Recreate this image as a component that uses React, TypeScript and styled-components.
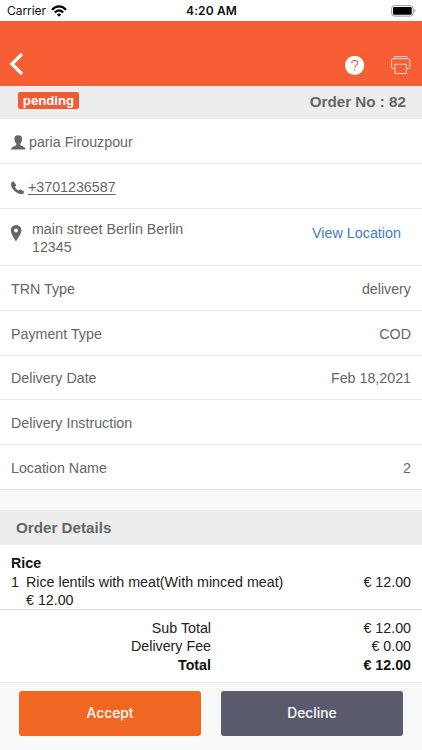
import React from "react";
import styled, { createGlobalStyle } from "styled-components";

const Global = createGlobalStyle`
  * { box-sizing: border-box; }
  body { margin: 0; background: #f9f9f9; }
`;

const Screen = styled.div`
  width: 422px;
  height: 750px;
  display: flex;
  flex-direction: column;
  overflow: hidden;
  background: #f9f9f9;
  color: #666;
  font: 14.25px/18px "Liberation Sans", Arial, sans-serif;
  white-space: nowrap;
`;

const StatusBar = styled.div`
  height: 21px;
  flex: none;
  display: grid;
  grid-template-columns: 1fr auto 1fr;
  align-items: center;
  padding: 1px 6px 0 7px;
  background: #fff;
  color: #111;
  font: 12px/18px Inter, sans-serif;
`;

const Carrier = styled.div`
  display: flex;
  align-items: center;
  gap: 5px;
  letter-spacing: -0.05px;
`;

const Clock = styled.div`
  font-weight: 600;
  font-size: 12px;
  letter-spacing: 0.12px;
`;

const BatterySlot = styled.div`
  display: flex;
  justify-content: flex-end;
`;

const Header = styled.header`
  height: 65px;
  flex: none;
  display: flex;
  align-items: flex-end;
  justify-content: space-between;
  padding: 0 11px 10px 9px;
  background: #f85e35;
`;

const Actions = styled.div`
  display: flex;
  align-items: center;
  gap: 26px;
`;

const IconButton = styled.button`
  display: flex;
  padding: 0;
  border: 0;
  background: none;
`;

const OrderBar = styled.div`
  height: 33px;
  flex: none;
  display: flex;
  justify-content: space-between;
  align-items: flex-start;
  padding: 6px 16px 0 18px;
  background: #ededed;
  font-weight: bold;
`;

const Badge = styled.span`
  width: 61px;
  height: 17px;
  border-radius: 2px;
  background: #f05a36;
  color: #fff;
  font-size: 13.2px;
  line-height: 18px;
  text-align: center;
`;

const OrderNumber = styled.span`
  margin-top: 1px;
  font-size: 15.2px;
`;

const Row = styled.div<{ $height?: number }>`
  height: ${(p) => p.$height ?? 45}px;
  flex: none;
  display: flex;
  align-items: center;
  justify-content: space-between;
  padding: 1px 11px 0;
  border-bottom: 1px solid #e6e6e6;
  background: #fff;
`;

const Contact = styled.div<{ $gap: number }>`
  display: flex;
  align-items: center;
  gap: ${(p) => p.$gap}px;
`;

const Phone = styled.a`
  color: inherit;
  text-decoration: underline;
  text-decoration-thickness: 1px;
  text-underline-offset: 2px;
`;

const MapLink = styled.a`
  margin: 0 10px 9px 0;
  color: #3e80c3;
  font-size: 14.35px;
`;

const SectionTitle = styled.h2`
  height: 35px;
  flex: none;
  margin: 20px 0 0;
  padding: 0 16px;
  background: #ededed;
  font-size: 15.2px;
  line-height: 36px;
`;

const Items = styled.section`
  height: 65px;
  flex: none;
  padding: 9px 11px 0;
  border-bottom: 1px solid #ddd;
  background: #fff;
  color: #222;
`;

const Category = styled.div`
  height: 19px;
  color: #111;
  font-weight: bold;
`;

const Item = styled.div`
  display: grid;
  grid-template-columns: 15px 1fr auto;
`;

const Totals = styled.section`
  height: 73px;
  flex: none;
  display: grid;
  grid-template-columns: 200px 1fr;
  grid-auto-rows: 18.3px;
  padding: 9px 11px 0;
  border-bottom: 1px solid #e3e3e3;
  background: #fff;
  color: #222;
  text-align: right;
`;

const Amount = styled.div<{ $strong?: boolean }>`
  font-weight: ${(p) => (p.$strong ? "bold" : "normal")};
  color: ${(p) => (p.$strong ? "#111" : "#222")};
`;

const Footer = styled.footer`
  display: grid;
  grid-template-columns: 182px 182px;
  gap: 20px;
  padding: 8px 19px 0;
`;

const ActionButton = styled.button<{ $color: string }>`
  height: 45px;
  padding: 0;
  border: 0;
  border-radius: 3px;
  background: ${(p) => p.$color};
  color: #fff;
  font: 500 13.8px/45px Inter, sans-serif;
`;

const WifiIcon = () => (
  <svg width="16" height="12" viewBox="0 0 16 12" fill="none" stroke="#000" strokeWidth="2.2">
    <path d="M1 4.9C5 .1 11 .1 15 4.9" />
    <path d="M3.8 7.6c2.7-2.9 5.7-2.9 8.4 0" />
    <path d="M5.7 9.4c1.5-1.3 3.1-1.3 4.6 0L8 11.7Z" fill="#000" stroke="none" />
  </svg>
);

const BatteryIcon = () => (
  <svg width="25" height="12" viewBox="0 0 25 12">
    <rect x=".6" y=".6" width="21.5" height="10.5" rx="2.8" fill="#fff" stroke="#999" />
    <rect x="2" y="2" width="18.7" height="7.7" rx="1.3" />
    <path d="M23.3 4v3.6q1.2-.5 1.2-1.8T23.3 4" fill="#888" />
  </svg>
);

const BackIcon = () => (
  <svg width="16" height="24" viewBox="0 0 16 24" fill="none" stroke="#fff" strokeWidth="3.2">
    <path d="M13 2 2.8 12 13 22" />
  </svg>
);

const HelpIcon = () => (
  <svg width="20" height="20" viewBox="0 0 20 20">
    <circle cx="9.6" cy="9.4" r="9.6" fill="#fff" />
    <path d="M6.7 7.4q0-3 3-3t3 2.6c0 2-2.9 2.3-2.9 4.8" fill="none" stroke="#f4683f" strokeWidth="1.1" />
    <circle cx="9.8" cy="14.1" r=".8" fill="#f4683f" />
  </svg>
);

const PrinterIcon = () => (
  <svg width="20" height="20" viewBox="0 0 20 20" fill="none" stroke="#ffd9c9" strokeWidth="1">
    <path d="M3.5 2.7V.6h12.3v2.1M3.9 12.6H2.2Q.6 12.6.6 11V4.2q0-1.5 1.6-1.5h14.9q1.6 0 1.6 1.5V11q0 1.6-1.6 1.6h-1.7" />
    <path d="M3.9 8.2h11.5v9.3H3.9Z" />
  </svg>
);

const UserIcon = () => (
  <svg width="15" height="16" viewBox="0 0 15 16" fill="#666">
    <path d="M7.2 1.2C4.4 1.2 3.2 2.7 3.5 5.2c.1 2 .7 3.4 1.8 4.4v1.7l-3.9 1.6Q0 13.5 0 15.4h14.5q0-1.9-1.4-2.5L9.3 11.3V9.6c1.1-1 1.6-2.4 1.7-4.4C11.3 2.7 10 1.2 7.2 1.2Z" />
  </svg>
);

const PhoneIcon = () => (
  <svg width="13" height="16" viewBox="0 0 13 16" fill="#666">
    <path d="M.4 3.5 2.5 2.3 5.3 6.1 3.9 7.9q.9 2.1 3.7 3.6l1.8-1.3 3.8 2.4-.7 2q-1.3.9-3.2.4C4.5 13.7.1 9.4-.1 5.4Q-.1 4.2.4 3.5Z" />
  </svg>
);

const PinIcon = () => (
  <svg width="11" height="26" viewBox="0 0 11 26">
    <path d="M5 0A5.2 5.2 0 0 0-.2 5.3C-.2 9 2.9 12.8 5 16.5c2-3.7 5.4-7.5 5.4-11.2A5.3 5.3 0 0 0 5 0Zm0 3.4a2 2 0 1 1 0 4 2 2 0 0 1 0-4Z" fill="#666" fillRule="evenodd" />
  </svg>
);

const details = [
  { label: "TRN Type", value: "delivery", height: 45 },
  { label: "Payment Type", value: "COD", height: 45 },
  { label: "Delivery Date", value: "Feb 18,2021", height: 44 },
  { label: "Delivery Instruction", value: "", height: 45 },
  { label: "Location Name", value: "2", height: 45 },
];

const totals = [
  { label: "Sub Total", value: "€ 12.00" },
  { label: "Delivery Fee", value: "€ 0.00" },
  { label: "Total", value: "€ 12.00", strong: true },
];

export default function App() {
  return (
    <Screen>
      <Global />
      <StatusBar>
        <Carrier>Carrier <WifiIcon /></Carrier>
        <Clock>4:20 AM</Clock>
        <BatterySlot><BatteryIcon /></BatterySlot>
      </StatusBar>
      <Header>
        <IconButton aria-label="Back"><BackIcon /></IconButton>
        <Actions>
          <IconButton aria-label="Help"><HelpIcon /></IconButton>
          <IconButton aria-label="Print"><PrinterIcon /></IconButton>
        </Actions>
      </Header>
      <OrderBar>
        <Badge>pending</Badge>
        <OrderNumber>Order No : 82</OrderNumber>
      </OrderBar>
      <Row>
        <Contact $gap={3}><UserIcon /><span>paria Firouzpour</span></Contact>
      </Row>
      <Row>
        <Contact $gap={4}><PhoneIcon /><Phone>+3701236587</Phone></Contact>
      </Row>
      <Row $height={57}>
        <Contact $gap={10}>
          <PinIcon />
          <span>main street Berlin Berlin<br />12345</span>
        </Contact>
        <MapLink>View Location</MapLink>
      </Row>
      {details.map((d) => (
        <Row key={d.label} $height={d.height}>
          <span>{d.label}</span>
          <span>{d.value}</span>
        </Row>
      ))}
      <SectionTitle>Order Details</SectionTitle>
      <Items>
        <Category>Rice</Category>
        <Item>
          <span>1</span>
          <span>Rice lentils with meat(With minced meat)<br />€ 12.00</span>
          <span>€ 12.00</span>
        </Item>
      </Items>
      <Totals>
        {totals.map((t) => (
          <React.Fragment key={t.label}>
            <Amount $strong={t.strong}>{t.label}</Amount>
            <Amount $strong={t.strong}>{t.value}</Amount>
          </React.Fragment>
        ))}
      </Totals>
      <Footer>
        <ActionButton $color="#f16722">Accept</ActionButton>
        <ActionButton $color="#5a5a6e">Decline</ActionButton>
      </Footer>
    </Screen>
  );
}
